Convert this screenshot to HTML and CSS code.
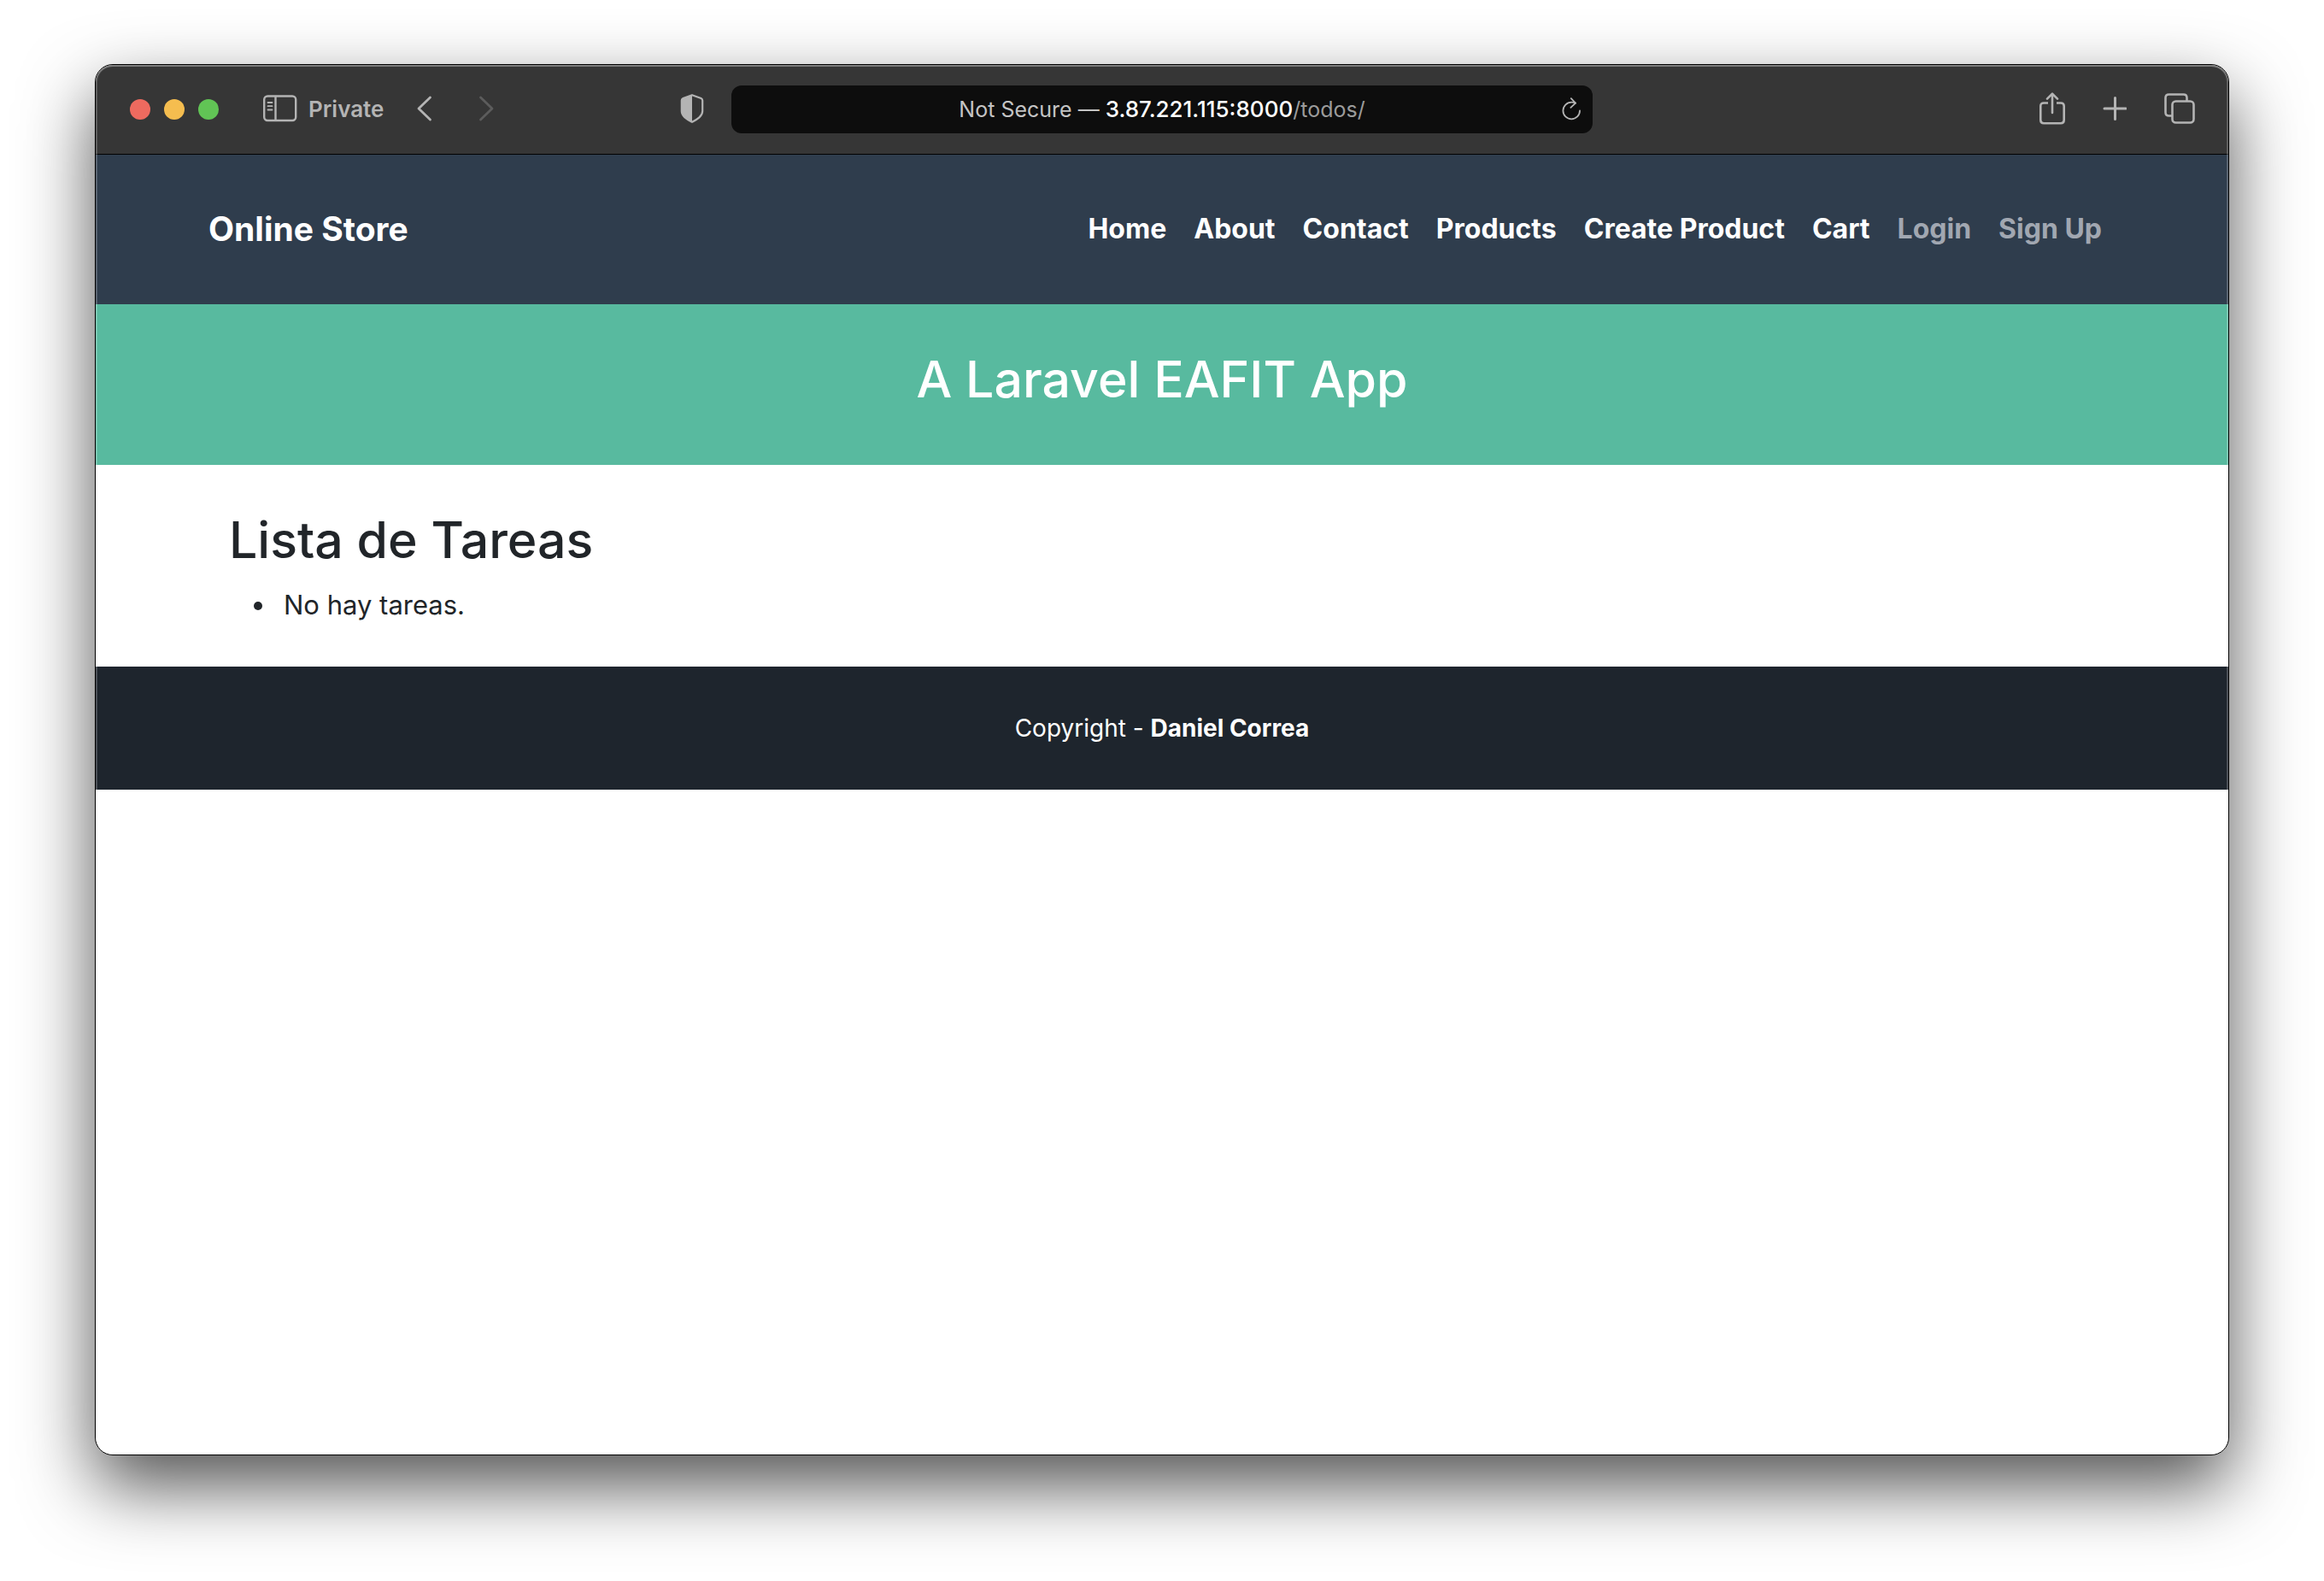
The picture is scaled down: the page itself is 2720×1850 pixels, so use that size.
FILE: index.html
```html
<!DOCTYPE html>
<html lang="es">
<head>
  <meta charset="utf-8">
  <meta name="viewport" content="width=device-width, initial-scale=1">
  <title>Online Store</title>
  <link rel="stylesheet" href="styles.css">
</head>
<body>
  <div class="window">
    <div class="toolbar">
      <div class="toolbar-side">
        <div class="lights">
          <button class="light light-close" type="button" aria-label="Close"></button>
          <button class="light light-minimize" type="button" aria-label="Minimize"></button>
          <button class="light light-zoom" type="button" aria-label="Zoom"></button>
        </div>
        <button class="tool sidebar-toggle" type="button">
          <svg width="40" height="32" viewBox="0 0 40 32" fill="none" stroke="currentColor" stroke-width="2.400" aria-hidden="true">
            <rect x="1.200" y="1.500" width="37" height="28.500" rx="4"/>
            <path d="M14.500 1.500v28.500"/>
            <path d="M5.500 9h5M5.500 13.200h5M5.500 17.500h5" stroke-linecap="round" stroke-width="1.800"/>
          </svg>
          <span>Private</span>
        </button>
        <div class="history">
          <button class="tool" type="button" aria-label="Back">
            <svg width="18" height="30" viewBox="0 0 18 30" fill="none" stroke="currentColor" stroke-width="2.800" stroke-linecap="round" stroke-linejoin="round" aria-hidden="true"><path d="M15.500 2L2 15l13.500 13"/></svg>
          </button>
          <button class="tool tool-off" type="button" aria-label="Forward" disabled>
            <svg width="18" height="30" viewBox="0 0 18 30" fill="none" stroke="currentColor" stroke-width="2.800" stroke-linecap="round" stroke-linejoin="round" aria-hidden="true"><path d="M2.500 2L16 15 2.500 28"/></svg>
          </button>
        </div>
        <button class="tool shield" type="button" aria-label="Privacy report">
          <svg width="28" height="34" viewBox="0 0 28 34" aria-hidden="true">
            <path d="M14 1.200L24.500 5Q26.200 5.800 26.200 7.500V20C26.200 26.500 19 30 14 32.800C9 30 1.800 26.500 1.800 20V7.500Q1.800 5.800 3.500 5Z" fill="none" stroke="currentColor" stroke-width="2.200" stroke-linejoin="round"/>
            <path d="M14 1.200V32.800C9 30 1.800 26.500 1.800 20V7.500Q1.800 5.800 3.500 5Z" fill="currentColor"/>
          </svg>
        </button>
      </div>
      <div class="address">
        <button class="url" type="button"><span class="url-note">Not Secure — </span><span class="url-host">3.87.221.115:8000</span><span class="url-path">/todos/</span></button>
        <button class="tool" type="button" aria-label="Reload">
          <svg width="24" height="28" viewBox="0 0 24 28" fill="none" stroke="currentColor" stroke-width="1.800" stroke-linecap="round" stroke-linejoin="round" aria-hidden="true">
            <path d="M22 15.500A9.800 9.800 0 1 1 12.200 5.700Q15 5.700 17 6.600"/>
            <path d="M11.800 1.200L17 6.600L11.400 11.800"/>
          </svg>
        </button>
      </div>
      <div class="toolbar-side toolbar-end">
        <button class="tool" type="button" aria-label="Share">
          <svg width="30" height="38" viewBox="0 0 30 38" fill="none" stroke="currentColor" stroke-width="2.600" stroke-linecap="round" stroke-linejoin="round" aria-hidden="true">
            <path d="M10 12.500H5Q1.300 12.500 1.300 16V32.500Q1.300 36.200 5 36.200H25Q28.700 36.200 28.700 32.500V16Q28.700 12.500 25 12.500H20" stroke-linecap="butt"/>
            <path d="M15 24V1.800M9 7.600L15 1.600L21 7.600"/>
          </svg>
        </button>
        <button class="tool" type="button" aria-label="New tab">
          <svg width="28" height="30" viewBox="0 0 28 30" fill="none" stroke="currentColor" stroke-width="3" stroke-linecap="round" aria-hidden="true"><path d="M14.500 2.500v25M2 15h25"/></svg>
        </button>
        <button class="tool" type="button" aria-label="Show all tabs">
          <svg width="36" height="36" viewBox="0 0 36 36" fill="none" stroke="currentColor" stroke-width="2.600" aria-hidden="true">
            <rect x="9.500" y="9.500" width="25" height="25" rx="4"/>
            <path d="M9.500 26.500H5.500Q1.500 26.500 1.500 22.500V5.500Q1.500 1.500 5.500 1.500H22.500Q26.500 1.500 26.500 5.500V9.500"/>
          </svg>
        </button>
      </div>
    </div>

    <nav class="navbar">
      <div class="container navbar-row">
        <a class="brand" href="#">Online Store</a>
        <div class="nav-links">
          <a class="nav-link active" href="#">Home</a>
          <a class="nav-link active" href="#">About</a>
          <a class="nav-link active" href="#">Contact</a>
          <a class="nav-link active" href="#">Products</a>
          <a class="nav-link active" href="#">Create Product</a>
          <a class="nav-link active" href="#">Cart</a>
          <a class="nav-link" href="#">Login</a>
          <a class="nav-link" href="#">Sign Up</a>
        </div>
      </div>
    </nav>

    <header class="masthead">
      <h2 class="title">A Laravel EAFIT App</h2>
    </header>

    <main class="container content">
      <h1 class="title">Lista de Tareas</h1>
      <ul class="tasks">
        <li>No hay tareas.</li>
      </ul>
    </main>

    <footer class="copyright">
      <small>Copyright - <a href="#">Daniel Correa</a></small>
    </footer>
  </div>
</body>
</html>
```
FILE: styles.css
```css
* {
  box-sizing: border-box;
}

body {
  margin: 0;
  padding: 75px 111px 147px;
  min-height: 100vh;
  display: flex;
  background: #fff;
  color: #212529;
  font-family: Inter, "Liberation Sans", sans-serif;
  font-size: 31px;
  line-height: 48px;
}

button {
  padding: 0;
  border: 0;
  background: none;
  font: inherit;
  color: inherit;
}

a {
  color: #fff;
  font-weight: 700;
  text-decoration: none;
}

svg {
  display: block;
}

/* Browser window */
.window {
  position: relative;
  flex: 1;
  border: 1px solid #000;
  border-radius: 21px;
  background: #fff;
  overflow: hidden;
  box-shadow: 0 36px 84px rgba(0, 0, 0, 0.68);
}

.window::after {
  content: "";
  position: absolute;
  inset: 0;
  border-radius: 20px;
  box-shadow: inset 0 2px 0 rgba(255, 255, 255, 0.2), inset 0 0 0 2px rgba(255, 255, 255, 0.2);
  pointer-events: none;
}

.toolbar {
  display: grid;
  grid-template-columns: 1fr minmax(0, 1008px) 1fr;
  align-items: center;
  height: 105px;
  border-bottom: 1px solid #000;
  background: #363636;
  color: #b4b4b4;
  font-size: 26px;
  line-height: 32px;
}

.toolbar-side {
  display: flex;
  align-items: center;
  padding: 0 32px 0 40px;
}

.toolbar-side svg {
  margin-bottom: 2px;
}

.toolbar-end {
  justify-content: flex-end;
  gap: 44px;
  padding: 0 39px;
}

.lights {
  display: flex;
  gap: 16px;
}

.light {
  width: 24px;
  height: 24px;
  border-radius: 50%;
}

.light-close {
  background: #ee6a5f;
}

.light-minimize {
  background: #f5bd4f;
}

.light-zoom {
  background: #61c455;
}

.sidebar-toggle {
  display: flex;
  align-items: center;
  gap: 13px;
  margin: 0 39px 0 52px;
  font-weight: 600;
}

.history {
  display: flex;
  gap: 54px;
}

.tool-off {
  color: #5c5c5c;
}

.shield {
  margin-left: auto;
}

.address {
  display: flex;
  align-items: center;
  height: 56px;
  padding: 0 13px 0 37px;
  border-radius: 12px;
  background: #0d0d0d;
}

.url {
  flex: 1;
  font-size: 25px;
  white-space: pre;
}

.url-note {
  color: #c4c4c4;
}

.url-host {
  color: #fff;
  font-size: 26px;
  font-weight: 500;
}

.url-path {
  color: #9b9b9b;
}

/* Store page */
.container {
  width: 100%;
  max-width: 2280px;
  margin: 0 auto;
  padding: 0 24px;
}

.navbar {
  padding: 47px 0 48px;
  background: #2f3d4d;
}

.navbar-row {
  display: flex;
  align-items: center;
  justify-content: space-between;
  min-height: 80px;
}

.brand {
  font-size: 39px;
}

.nav-links {
  display: flex;
  font-size: 32px;
}

.nav-link {
  padding: 0 16px;
  color: #a1a7b1;
}

.nav-link.active {
  color: #fff;
}

.title {
  margin: 0 0 12px;
  font-size: 59px;
  font-weight: 500;
  line-height: 80px;
}

.masthead {
  padding: 48px;
  background: #58ba9f;
  color: #fff;
  text-align: center;
}

.content {
  padding: 48px;
}

.tasks {
  margin: 0;
  padding-left: 56px;
}

.tasks li {
  padding-left: 8px;
}

.copyright {
  padding: 48px;
  background: #1e252d;
  color: #fff;
  font-size: 28px;
  text-align: center;
}

.copyright small {
  display: block;
  font-size: 28px;
}
```
